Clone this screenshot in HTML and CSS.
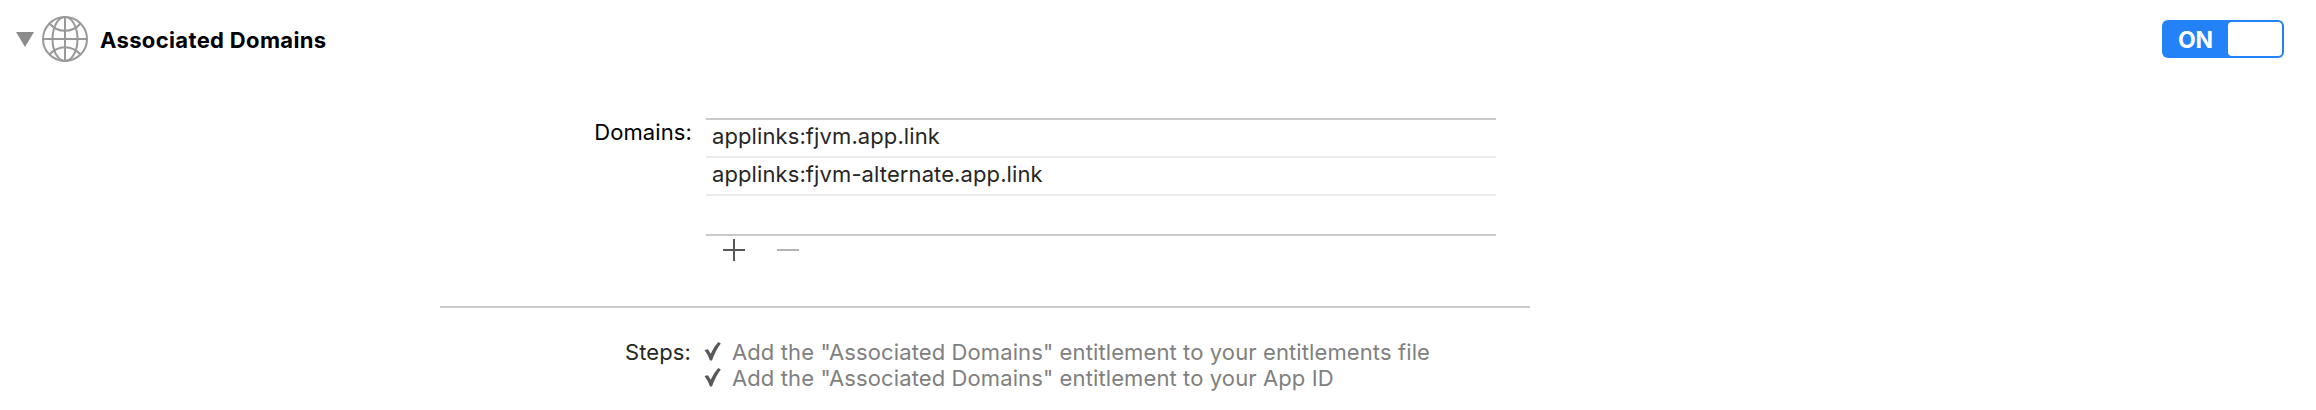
FILE: index.html
```html
<!DOCTYPE html>
<html lang="en">
<head>
<meta charset="utf-8">
<title>Associated Domains</title>
<link rel="stylesheet" href="styles.css">
</head>
<body>
<section class="capability">
  <header class="header">
    <svg class="disclosure" viewBox="0 0 18 15"><path d="M0 0H18L9 15Z"/></svg>
    <svg class="globe" viewBox="0 0 46 46">
      <circle cx="23" cy="23" r="22"/>
      <path d="M23 1V45M1 23H45"/>
      <ellipse cx="23" cy="23" rx="12.500" ry="22"/>
      <path d="M7.500 7.5C16 17.300 30 17.300 38.500 7.500M7.500 38.500C16 28.700 30 28.700 38.500 38.500"/>
    </svg>
    <h1 class="title">Associated Domains</h1>
    <div class="toggle"><span class="toggle-label">ON</span><span class="knob"></span></div>
  </header>
  <div class="row domains">
    <div class="label"><span>Domains:</span></div>
    <div class="table-area">
      <ul class="table">
        <li>applinks:fjvm.app.link</li>
        <li>applinks:fjvm-alternate.app.link</li>
        <li></li>
      </ul>
      <div class="actions">
        <svg class="add" viewBox="0 0 22 22"><path d="M0 11H22M11 0V22"/></svg>
        <svg class="remove" viewBox="0 0 22 22"><path d="M0 11H22"/></svg>
      </div>
    </div>
  </div>
  <hr class="divider">
  <div class="row steps">
    <div class="label steps-label"><span>Steps:</span></div>
    <ul class="step-list">
      <li><svg class="check" viewBox="0 0 17 20"><path d="M0.500 8L4 7.300L6.700 11.700Q9.500 5 14.300 0L16.800 1.500Q11.500 8.500 8 18.500H6Q4 12.500 0.500 8Z"/></svg><span class="step-text">Add the "Associated Domains" entitlement to your entitlements file</span></li>
      <li><svg class="check" viewBox="0 0 17 20"><path d="M0.500 8L4 7.300L6.700 11.700Q9.500 5 14.300 0L16.800 1.500Q11.500 8.500 8 18.500H6Q4 12.500 0.500 8Z"/></svg><span class="step-text">Add the "Associated Domains" entitlement to your App ID</span></li>
    </ul>
  </div>
</section>
</body>
</html>
```
FILE: styles.css
```css
* { box-sizing: border-box; }
body { margin: 0; background: #fff; font: 22px/26px Inter, sans-serif; letter-spacing: 0.1px; color: #000; }
ul { list-style: none; margin: 0; padding: 0; }
svg { display: block; flex: none; }
.capability { height: 410px; overflow: hidden; }
.header { display: flex; align-items: center; height: 78px; padding: 0 32px 0 16px; }
.disclosure { width: 18px; height: 15px; margin-top: 1px; fill: #8c8c8c; }
.globe { width: 46px; height: 46px; margin-left: 8px; fill: none; stroke: #999; stroke-width: 2; }
.title { margin: 2px 0 0 12px; font-size: 22px; line-height: 26px; font-weight: 700; letter-spacing: 0.35px; white-space: nowrap; }
.toggle { display: flex; align-items: center; width: 122px; height: 38px; margin-left: auto; padding: 2px; border-radius: 6px; background: #2382f7; }
.toggle-label { flex: 1; padding: 2px 0 0 14px; color: #fff; font-size: 23px; font-weight: 700; letter-spacing: -0.3px; }
.knob { width: 54px; height: 34px; border-radius: 4px; background: #fff; }
.row { display: flex; white-space: nowrap; }
.domains { padding-top: 40px; height: 228px; }
.label { width: 706px; padding: 1px 14px 0 0; text-align: right; }
.table-area { width: 790px; }
.table { height: 118px; border-top: 2px solid #cacaca; border-bottom: 2px solid #cacaca; }
.table li { height: 38px; padding: 3px 0 0 6px; border-bottom: 2px solid #ebebeb; color: #262626; }
.table li:last-child { border: 0; }
.actions { display: flex; gap: 32px; padding: 3px 0 0 17px; }
.actions svg { width: 22px; height: 22px; stroke-width: 2; }
.add { stroke: #575757; }
.remove { stroke: #b2b2b2; }
.divider { width: 1090px; height: 2px; margin: 0 0 0 440px; border: 0; background: #cacaca; }
.steps { padding-top: 31px; }
.steps-label { padding-top: 0; padding-right: 15px; color: #262626; }
.step-list { color: #808080; }
.step-list li { display: flex; height: 26px; }
.step-text { letter-spacing: 0.11px; }
.check { width: 17px; height: 20px; margin: 3px 11px 0 -2px; fill: #595959; }
```
